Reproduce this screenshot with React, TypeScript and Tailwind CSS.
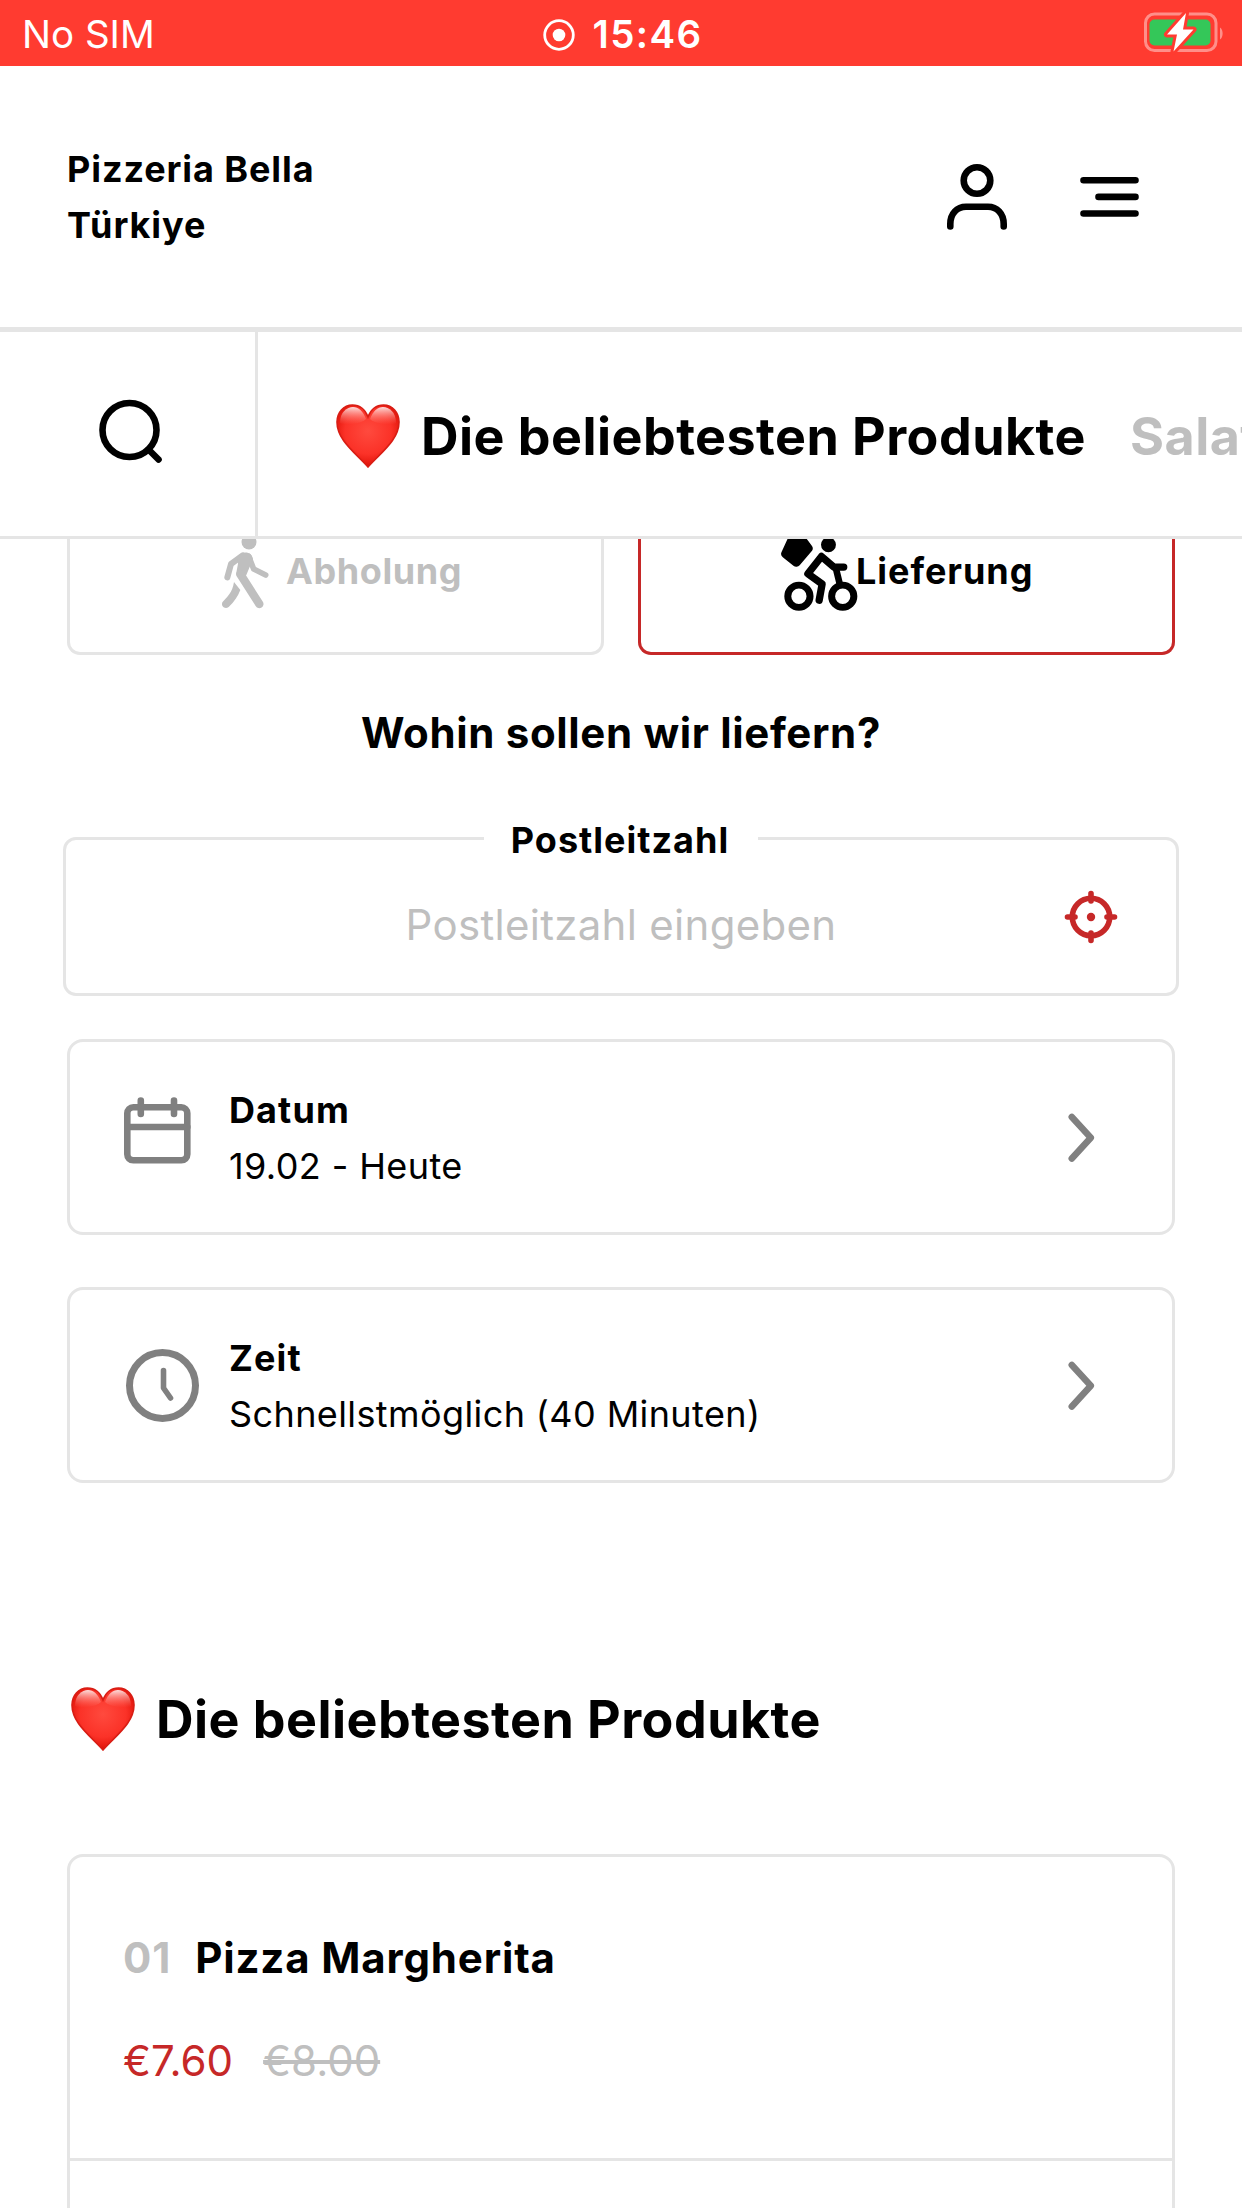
import type { ReactNode } from 'react';

interface InfoCardProps {
  icon: ReactNode;
  label: string;
  value: string;
}

function HeartIcon({ id }: { id: string }) {
  return (
    <svg viewBox="0 0 64 64" className="w-[64px] h-[64px] shrink-0">
      <defs>
        <radialGradient id={`${id}-body`} cx="0.5" cy="0.42" r="0.62">
          <stop offset="0" stopColor="#ff4a3e" />
          <stop offset="0.6" stopColor="#fb3228" />
          <stop offset="0.85" stopColor="#e6190f" />
          <stop offset="1" stopColor="#b80c06" />
        </radialGradient>
        <linearGradient id={`${id}-shine`} x1="0" y1="0" x2="0" y2="1">
          <stop offset="0" stopColor="#fff" stopOpacity="0.85" />
          <stop offset="1" stopColor="#ff8a80" stopOpacity="0" />
        </linearGradient>
      </defs>
      <path
        d="M32 13C29 5 23 1 16.500 1C7.500 1 1 8.500 1 18C1 36 19 48.500 32 63C45 48.500 63 36 63 18C63 8.500 56.500 1 47.500 1C41 1 35 5 32 13Z"
        fill={`url(#${id}-body)`}
        stroke="#d81d14"
        strokeWidth="1.600"
      />
      <path d="M4 19C4 8 11 3 17 3C22.500 3 27 7 30 15C25 20 9 22 4 19Z" fill={`url(#${id}-shine)`} />
      <path d="M60 19C60 8 53 3 47 3C41.500 3 37 7 34 15C39 20 55 22 60 19Z" fill={`url(#${id}-shine)`} />
    </svg>
  );
}

function BatteryIcon() {
  return (
    <svg viewBox="0 0 84 48" className="w-[84px] h-[48px]">
      <rect x="5.500" y="6" width="70.500" height="36.500" rx="9" fill="none" stroke="#ff8f89" strokeWidth="3" />
      <path d="M80 19.500C83.500 21.500 83.500 29.500 80 31.500Z" fill="#ff8f89" />
      <rect x="9.500" y="11.500" width="61" height="26" rx="5" fill="#34c759" />
      <path
        d="M46 5L27 26.500H37L33.500 43.500L53.500 21.500H43Z"
        fill="#fff"
        stroke="#ff3b30"
        strokeWidth="6"
        strokeLinejoin="round"
        paintOrder="stroke"
      />
    </svg>
  );
}

function UserIcon() {
  return (
    <svg viewBox="0 0 64 72" className="w-[64px] h-[72px]" fill="none" stroke="#000" strokeWidth="6.600" strokeLinecap="round">
      <circle cx="32" cy="19.500" r="13.300" />
      <path d="M5.300 65.500V63C5.300 52.500 12 45.800 21 45.800H43C52 45.800 58.700 52.500 58.700 63V65.500" />
    </svg>
  );
}

function MenuIcon() {
  return (
    <svg viewBox="0 0 64 72" className="w-[64px] h-[72px]" fill="none" stroke="#000" strokeWidth="6.600" strokeLinecap="round">
      <path d="M5.500 19.300H57.500M20.500 35.900H57.500M5.500 52.500H57.500" />
    </svg>
  );
}

function SearchIcon() {
  return (
    <svg viewBox="0 0 72 72" className="w-[72px] h-[72px]" fill="none" stroke="#000" strokeWidth="6.600" strokeLinecap="round">
      <circle cx="37.500" cy="32" r="27" />
      <path d="M56.500 51.500L66.500 61.500" />
    </svg>
  );
}

function WalkIcon() {
  return (
    <svg viewBox="24 44 168 213" className="w-[56px] h-[71px]" fill="none" stroke="#bfbfbf" strokeLinecap="round" strokeLinejoin="round">
      <circle cx="117" cy="53" r="22.500" fill="#bfbfbf" stroke="none" />
      <path d="M98 93L63 119L52 159" strokeWidth="18" />
      <path d="M116 96L131 134L167 152" strokeWidth="17" />
      <path d="M80 98C95 80 124 78 129 104L109 152L98 166L78 150L84 118Z" fill="#bfbfbf" stroke="none" />
      <path d="M91 150L148 239" strokeWidth="25" />
      <path d="M72 173L91 197C84 216 73 232 56 248C46 256 32 247 37 234C52 217 67 205 72 173Z" fill="#bfbfbf" stroke="none" />
    </svg>
  );
}

function BikeIcon() {
  return (
    <svg viewBox="54 60 244 219" className="w-[81px] h-[73px] shrink-0 -mr-[3px]" fill="none" stroke="#000" strokeLinecap="round" strokeLinejoin="round">
      <circle cx="117" cy="232" r="33.500" strokeWidth="21" />
      <circle cx="249" cy="232" r="33.500" strokeWidth="21" />
      <circle cx="206" cy="77" r="22.500" fill="#000" stroke="none" />
      <path d="M95 65H128L145 88L109 130L77 104Z" fill="#000" strokeWidth="27" />
      <path d="M252 144H222L185 112L144 164L187 195L178 244" strokeWidth="22" />
      <path d="M228 146L240 195" strokeWidth="20" />
    </svg>
  );
}

function TargetIcon() {
  return (
    <svg viewBox="0 0 60 60" className="w-[60px] h-[60px]" fill="none" stroke="#c62828" strokeWidth="5.600" strokeLinecap="round">
      <circle cx="30" cy="30" r="18.700" />
      <path d="M30 6.500V14M30 46V53.500M6.500 30H14M46 30H53.500" />
      <circle cx="30" cy="30" r="4.200" fill="#c62828" stroke="none" />
    </svg>
  );
}

function CalendarIcon() {
  return (
    <svg viewBox="0 0 80 80" className="w-[80px] h-[80px]" fill="none" stroke="#808080" strokeWidth="6.600" strokeLinecap="round">
      <rect x="7.300" y="10.300" width="60" height="53" rx="6" />
      <path d="M7.300 30H67.300M20.800 3.500V17M54 3.500V17" />
    </svg>
  );
}

function ClockIcon() {
  return (
    <svg viewBox="0 0 80 80" className="w-[80px] h-[80px]" fill="none" stroke="#808080" strokeLinecap="round" strokeLinejoin="round">
      <circle cx="42.500" cy="40.500" r="33" strokeWidth="7" />
      <path d="M43.500 25.500V43L50.500 53" strokeWidth="5.600" />
    </svg>
  );
}

function ChevronIcon() {
  return (
    <svg
      viewBox="0 0 80 80"
      className="w-[80px] h-[80px] ml-auto"
      fill="none"
      stroke="#808080"
      strokeWidth="6.600"
      strokeLinecap="round"
      strokeLinejoin="round"
    >
      <path d="M29.800 20L48.800 40.700L29.800 61.500" />
    </svg>
  );
}

function InfoCard({ icon, label, value }: InfoCardProps) {
  return (
    <button className="w-full h-[196px] px-[50px] flex items-center text-left border-[3px] border-[#e5e5e5] rounded-[16px]">
      {icon}
      <div className="ml-[29px] pt-[2px] text-[36px] leading-[56px]">
        <p className="font-[650] tracking-[1.1px]">{label}</p>
        <p className="tracking-[0.4px]">{value}</p>
      </div>
      <ChevronIcon />
    </button>
  );
}

export default function App() {
  return (
    <div className="w-[1242px] h-[2208px] overflow-hidden bg-white text-black font-['Inter',sans-serif]">
      {/* ── Statusleiste ── */}
      <div className="h-[66px] bg-[#ff3b30] text-white text-[38.5px] flex items-center px-[18px]">
        <span className="flex-1 pl-[4px] pt-[3px]">No SIM</span>
        <div className="flex items-center gap-[15px] pt-[3px] pr-[2px]">
          <svg viewBox="0 0 36 36" className="w-[36px] h-[36px]">
            <circle cx="18" cy="18" r="14.300" fill="none" stroke="#fff" strokeWidth="2.800" />
            <circle cx="18" cy="18" r="6.300" fill="#fff" />
          </svg>
          <span className="font-semibold tracking-[1.4px]">15:46</span>
        </div>
        <div className="flex-1 flex justify-end pb-[2px]">
          <BatteryIcon />
        </div>
      </div>

      {/* ── Header ── */}
      <header className="h-[266px] pl-[67px] pr-[100px] flex items-center justify-between border-b-[5px] border-[#e5e5e5]">
        <h1 className="w-[280px] pt-[1px] text-[36px] leading-[56px] font-[650] tracking-[0.9px]">Pizzeria Bella Türkiye</h1>
        <div className="flex items-center gap-[69px]">
          <UserIcon />
          <MenuIcon />
        </div>
      </header>

      {/* ── Kategorien ── */}
      <nav className="h-[207px] flex border-b-[3px] border-[#e5e5e5]">
        <button className="w-[258px] shrink-0 flex items-center justify-center border-r-[3px] border-[#e5e5e5]">
          <SearchIcon />
        </button>
        <div className="flex-1 min-w-0 overflow-hidden flex items-center pl-[78px] pt-[3px] text-[52px] font-bold tracking-[0.45px] whitespace-nowrap">
          <HeartIcon id="nav" />
          <span className="ml-[21px] pt-[2px]">Die beliebtesten Produkte</span>
          <span className="ml-[44px] pt-[2px] text-[#bfbfbf]">Salat</span>
        </div>
      </nav>

      <main className="px-[67px]">
        {/* ── Abholung / Lieferung ── */}
        <div className="flex justify-between text-[36px] font-[650]">
          <button className="w-[537px] h-[116px] flex items-start pl-[148px] border-[3px] border-t-0 border-[#e5e5e5] rounded-b-[13px] text-[#bfbfbf]">
            <WalkIcon />
            <span className="ml-[12px] leading-[65px] tracking-[0.6px]">Abholung</span>
          </button>
          <button className="w-[537px] h-[116px] flex items-start pl-[137px] border-[3px] border-t-0 border-[#c62828] rounded-b-[13px]">
            <BikeIcon />
            <span className="leading-[65px] tracking-[0.95px]">Lieferung</span>
          </button>
        </div>

        <h2 className="mt-[50px] text-center text-[42px] leading-[56px] font-[650] tracking-[0.65px]">Wohin sollen wir liefern?</h2>

        {/* ── Postleitzahl ── */}
        <div className="relative h-[159px] mt-[76px] -mx-[4px] border-[3px] border-[#e5e5e5] rounded-[13px]">
          <label
            htmlFor="plz"
            className="absolute left-[418px] -top-[28px] w-[274px] bg-white pr-[2px] text-center text-[36px] leading-[56px] font-[650] tracking-[1px]"
          >
            Postleitzahl
          </label>
          <input
            id="plz"
            placeholder="Postleitzahl eingeben"
            className="w-full h-full pt-[16px] text-center text-[42px] tracking-[0.3px] placeholder:text-[#bfbfbf] outline-none"
          />
          <button className="absolute right-[55px] top-[47px]">
            <TargetIcon />
          </button>
        </div>

        {/* ── Datum & Zeit ── */}
        <div className="mt-[43px] flex flex-col gap-[52px]">
          <InfoCard icon={<CalendarIcon />} label="Datum" value="19.02 - Heute" />
          <InfoCard icon={<ClockIcon />} label="Zeit" value="Schnellstmöglich (40 Minuten)" />
        </div>

        {/* ── Produkte ── */}
        <h2 className="mt-[204px] pl-[4px] flex items-center text-[52px] leading-[62px] font-bold tracking-[0.45px]">
          <HeartIcon id="section" />
          <span className="ml-[21px] pt-[1px]">Die beliebtesten Produkte</span>
        </h2>
        <div className="mt-[103px] h-[400px] border-[3px] border-[#e5e5e5] rounded-[16px] text-[42px] leading-[56px]">
          <div className="pt-[73px] pb-[69px] px-[53px] border-b-[3px] border-[#e5e5e5]">
            <div className="flex gap-[24px] font-[650] tracking-[0.85px]">
              <span className="text-[#bfbfbf]">01</span>
              <span>Pizza Margherita</span>
            </div>
            <div className="mt-[47px] flex gap-[30px]">
              <span className="text-[#c62828]">€7.60</span>
              <span className="text-[#bfbfbf] line-through">€8.00</span>
            </div>
          </div>
        </div>
      </main>
    </div>
  );
}
